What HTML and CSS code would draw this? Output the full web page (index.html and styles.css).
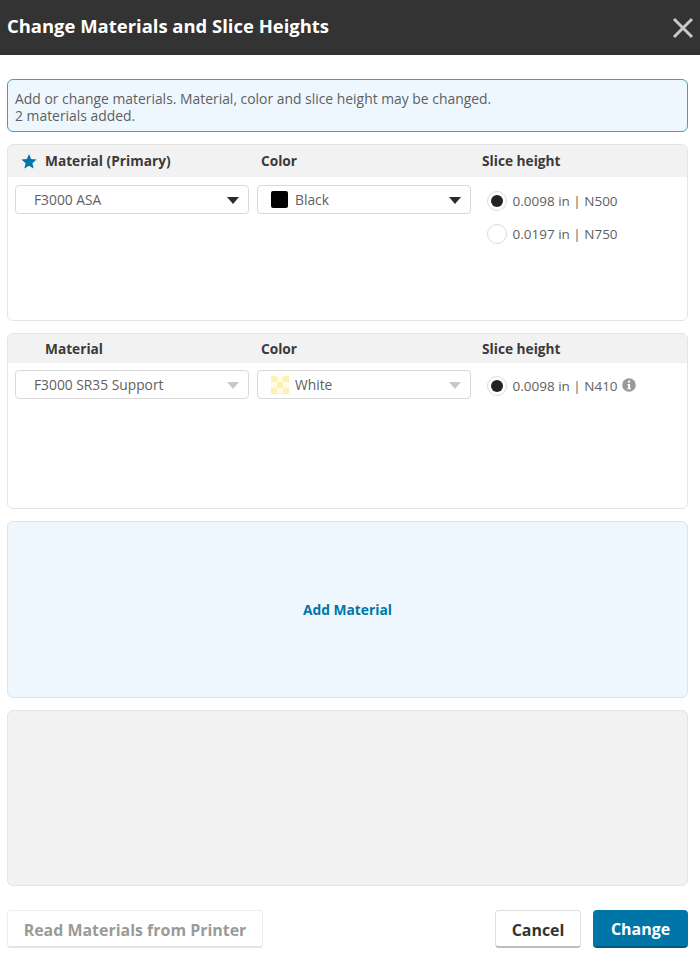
FILE: index.html
```html
<!DOCTYPE html>
<html lang="en">
<head>
<meta charset="utf-8">
<title>Change Materials and Slice Heights</title>
<link rel="stylesheet" href="styles.css">
</head>
<body>
<div class="dialog">
  <header class="titlebar">
    <h1 class="title">Change Materials and Slice Heights</h1>
    <svg class="close" width="22" height="22" viewBox="0 0 22 22" aria-label="Close"><path d="M2 2 L20 20 M20 2 L2 20" stroke="#c9c9c9" stroke-width="3" fill="none"/></svg>
  </header>
  <main class="content">
    <div class="info">Add or change materials. Material, color and slice height may be changed.<br>2 materials added.</div>

    <section class="card card-first">
      <div class="card-head head-first">
        <div class="col-material">
          <svg class="star" width="16" height="15" viewBox="0 0 16 15"><path d="M8 0 L10.1 5.1 L15.6 5.6 L11.4 9.2 L12.7 14.6 L8 11.7 L3.3 14.6 L4.6 9.2 L0.4 5.6 L5.9 5.1 Z" fill="#0076a8"/></svg>
          <span>Material (Primary)</span>
        </div>
        <div class="col-color">Color</div>
        <div class="col-slice">Slice height</div>
      </div>
      <div class="card-body">
        <div class="select select-material"><span>F3000 ASA</span><i class="caret"></i></div>
        <div class="select select-color"><b class="swatch swatch-black"></b><span>Black</span><i class="caret"></i></div>
        <div class="slices">
          <div class="slice"><i class="radio radio-on"></i><span>0.0098 in | N500</span></div>
          <div class="slice"><i class="radio"></i><span>0.0197 in | N750</span></div>
        </div>
      </div>
    </section>

    <section class="card card-second">
      <div class="card-head head-second">
        <div class="col-material"><span>Material</span></div>
        <div class="col-color">Color</div>
        <div class="col-slice">Slice height</div>
      </div>
      <div class="card-body">
        <div class="select select-material"><span>F3000 SR35 Support</span><i class="caret caret-off"></i></div>
        <div class="select select-color">
          <svg class="swatch-svg" width="18" height="18" viewBox="0 0 18 18"><rect width="18" height="18" fill="#fffbe6"/><path d="M0 0h6v6H0zM12 0h6v6h-6zM6 6h6v6H6zM0 12h6v6H0zM12 12h6v6h-6z" fill="#fff0b4"/></svg>
          <span>White</span><i class="caret caret-off"></i>
        </div>
        <div class="slices">
          <div class="slice"><i class="radio radio-on"></i><span>0.0098 in | N410</span>
            <svg class="info-icon" width="14" height="14" viewBox="0 0 14 14"><circle cx="7" cy="7" r="6.8" fill="#999"/><rect x="6" y="2.6" width="2.1" height="2.1" fill="#fff"/><path d="M5.4 6h2.7v4.2h.9v1.1H5.2v-1.1h.9V7.1h-.7z" fill="#fff"/></svg>
          </div>
        </div>
      </div>
    </section>

    <button class="add" type="button">Add Material</button>
    <div class="empty"></div>
  </main>
  <footer class="actions">
    <button class="btn btn-read" type="button">Read Materials from Printer</button>
    <div class="actions-right">
      <button class="btn btn-cancel" type="button">Cancel</button>
      <button class="btn btn-change" type="button">Change</button>
    </div>
  </footer>
</div>
</body>
</html>
```

FILE: styles.css
```css
* { box-sizing: border-box; }
html, body { margin: 0; padding: 0; background: #fff; }
body {
  font-family: "Open Sans", "Noto Sans", sans-serif;
  font-size: 13.5px;
  color: #5f5f5f;
}
.dialog { width: 700px; height: 956px; }
.titlebar {
  height: 55px;
  background: #333;
  display: flex;
  align-items: center;
  justify-content: space-between;
  padding: 0 7px 4px 7px;
}
.title { margin: 0; font-size: 18.45px; font-weight: 700; color: #fff; }
.close { margin-top: 4px; margin-right: -1px; }
.content { padding: 24px 12px 0 7px; display: flex; flex-direction: column; }
.info {
  height: 53px;
  background: #eef7fe;
  border: 1px solid #4a9ac4;
  border-radius: 6px;
  padding: 10px 7px 0;
  line-height: 17px;
  font-size: 13.9px;
  margin-bottom: 12px;
}
.card { border: 1px solid #e4e4e4; border-radius: 6px; margin-bottom: 12px; overflow: hidden; }
.card-first { height: 177px; }
.card-second { height: 176px; }
.card-head {
  display: flex;
  align-items: center;
  background: #f2f2f2;
  font-weight: 700;
  font-size: 13.7px;
  color: #3a3a3a;
}
.head-first { height: 32px; padding-bottom: 2px; }
.head-second { height: 29px; }
.col-material { width: 253px; padding-left: 37px; position: relative; }
.star { position: absolute; left: 13px; top: 3px; }
.col-color { width: 221px; }
.card-body { display: flex; padding-top: 8px; padding-left: 7px; align-items: flex-start; }
.head-second + .card-body { padding-top: 7px; }
.select {
  height: 29px;
  border: 1px solid #d9d9d9;
  border-radius: 4px;
  background: #fff;
  display: flex;
  align-items: center;
  position: relative;
  font-size: 13.8px;
}
.select-material { width: 234px; margin-right: 8px; padding-left: 18px; }
.select-color { width: 214px; margin-right: 16px; padding-left: 13px; gap: 7px; }
.swatch { width: 17px; height: 17px; border-radius: 2px; display: block; }
.swatch-black { background: #000; }
.swatch-svg { margin-right: -1px; }
.caret {
  position: absolute;
  right: 9px;
  top: 11px;
  width: 0;
  height: 0;
  border-left: 6.5px solid transparent;
  border-right: 6.5px solid transparent;
  border-top: 7px solid #2b2b2b;
}
.caret-off { border-top-color: #c8c8c8; }
.slices { display: flex; flex-direction: column; gap: 13px; padding-top: 6px; }
.slice { display: flex; align-items: center; height: 20px; font-size: 13.5px; }
.radio {
  width: 20px;
  height: 20px;
  border: 1px solid #dcdcdc;
  border-radius: 50%;
  background: #fff;
  margin-right: 5.5px;
  display: block;
  position: relative;
}
.radio-on::after {
  content: "";
  position: absolute;
  left: 3px;
  top: 3px;
  width: 12px;
  height: 12px;
  border-radius: 50%;
  background: #222;
}
.info-icon { margin-left: 4.5px; margin-top: -2px; }
.add {
  height: 177px;
  border: 1px solid #dde5ea;
  border-radius: 6px;
  background: #eef7fe;
  color: #0076a8;
  font: 700 13.8px "Open Sans", "Noto Sans", sans-serif;
  margin-bottom: 12px;
  padding: 0;
}
.empty { height: 176px; background: #f2f2f2; border: 1px solid #e4e4e4; border-radius: 6px; }
.actions {
  display: flex;
  justify-content: space-between;
  padding: 24px 12px 0 7px;
}
.actions-right { display: flex; gap: 12px; }
.btn {
  height: 38px;
  border-radius: 4px;
  font: 700 15.95px "Open Sans", "Noto Sans", sans-serif;
  padding: 2px 0 0;
}
.btn-read {
  width: 256px;
  background: #fff;
  color: #9a9a9a;
  border: 1px solid #eee;
  border-bottom: 2px solid #e4e4e4;
}
.btn-cancel {
  width: 86px;
  background: #fff;
  color: #333;
  border: 1px solid #dedede;
  border-bottom: 2px solid #bdbdbd;
}
.btn-change {
  width: 95px;
  background: #0076a8;
  color: #fff;
  border: 0;
  border-bottom: 2px solid #005a80;
}
```
